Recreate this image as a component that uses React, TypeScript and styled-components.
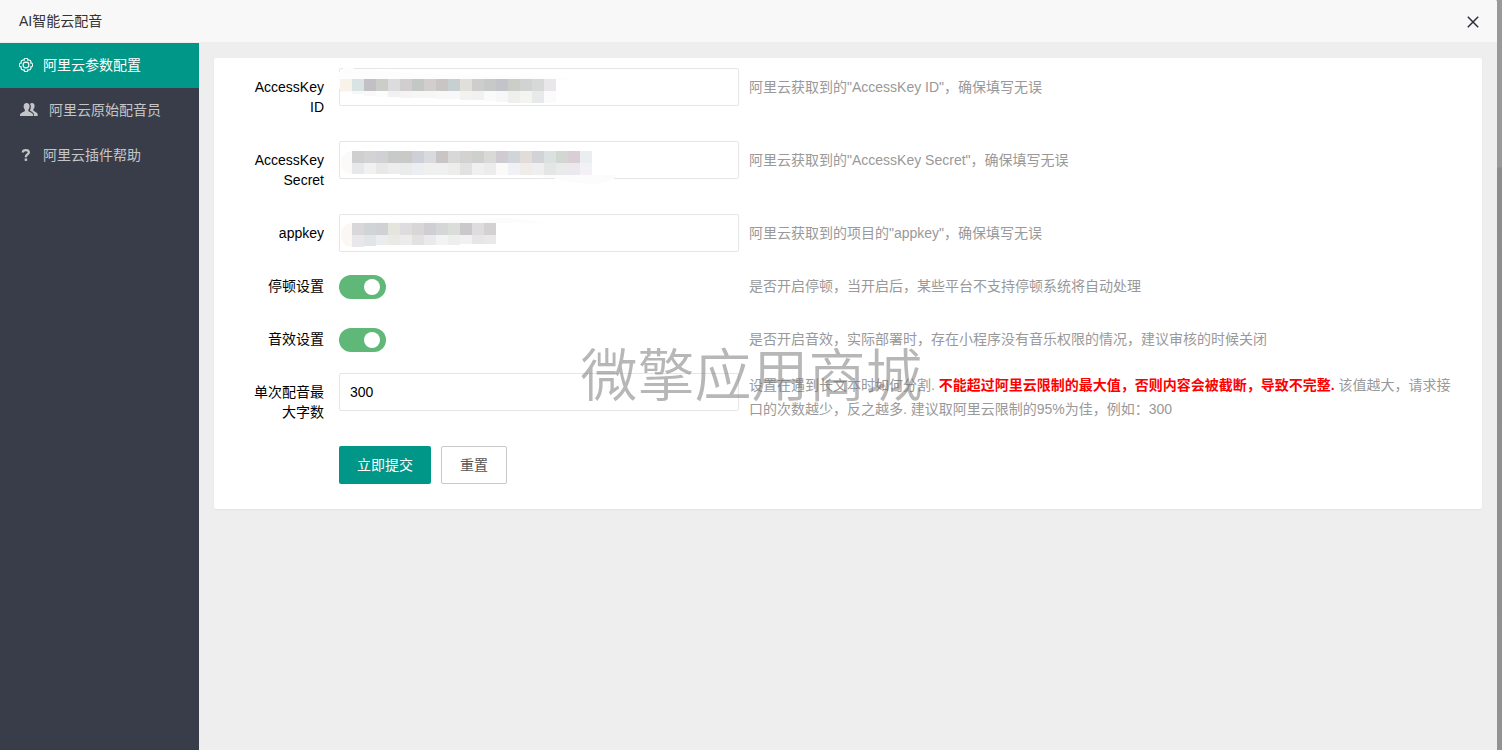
import React from 'react';
import styled, { createGlobalStyle } from 'styled-components';

const GlobalStyle = createGlobalStyle`
  * { box-sizing: border-box; }
  body {
    margin: 0;
    background: #929292;
    color: #000;
    font: 14px/20px "Liberation Sans", "Noto Sans CJK SC", sans-serif;
  }
  button, input { font: inherit; }
`;

const Backdrop = styled.div`
  min-height: 100vh;
  display: flex;
  padding-right: 5px;
  background: linear-gradient(#999 0, #999 167px, #8c8c8c 168px, #929292 100%);
`;

const Dialog = styled.section`
  position: relative;
  flex: 1;
  display: flex;
  flex-direction: column;
  background: #eee;
  border-radius: 0 2px 0 0;
  overflow: hidden;
`;

const TitleBar = styled.header`
  display: flex;
  align-items: center;
  justify-content: space-between;
  height: 43px;
  padding: 0 18px 0 19px;
  background: #f8f8f8;
  border-bottom: 1px solid #eee;
`;

const Title = styled.h1`
  margin: 0;
  font-size: 14px;
  font-weight: 400;
  color: #333;
`;

const CloseButton = styled.button`
  display: flex;
  padding: 2px 0 0;
  border: 0;
  background: none;
  color: #2e2d3c;
  cursor: pointer;
`;

const Body = styled.div`
  flex: 1;
  display: flex;
`;

const Sidebar = styled.nav`
  flex: 0 0 199px;
  background: #393d49;
`;

const NavLink = styled.a<{ $active?: boolean }>`
  display: flex;
  align-items: center;
  gap: 10px;
  height: 45px;
  padding: 0 19px 2px;
  text-decoration: none;
  color: ${(p) => (p.$active ? '#fff' : '#c4c5c8')};
  background: ${(p) => (p.$active ? '#009688' : 'transparent')};
`;

const Main = styled.main`
  flex: 1;
  min-width: 0;
  padding: 15px;
`;

const Card = styled.form`
  padding: 10px 15px;
  background: #fff;
  border-radius: 2px;
  box-shadow: 0 1px 2px rgba(0, 0, 0, 0.05);
`;

const Row = styled.div`
  display: flex;
  align-items: flex-start;
  margin-bottom: 15px;
`;

const Label = styled.label`
  flex: 0 0 110px;
  padding: 9px 15px;
  text-align: right;
`;

const Control = styled.div`
  position: relative;
  flex: 0 0 400px;
  display: flex;
  align-items: center;
  min-height: 38px;
`;

const TextInput = styled.input`
  width: 100%;
  height: 38px;
  padding: 0 10px;
  border: 1px solid #e6e6e6;
  border-radius: 2px;
  background: #fff;
  color: #000;
  outline: 0;
`;

const Switch = styled.input`
  appearance: none;
  width: 47px;
  height: 24px;
  margin: 2px 0 0;
  padding: 4px 6px;
  border-radius: 12px;
  background: #5fb878;
  cursor: pointer;
  &::before {
    content: '';
    display: block;
    width: 16px;
    height: 16px;
    margin-left: auto;
    border-radius: 50%;
    background: #fff;
  }
  &:not(:checked) { background: #d2d2d2; }
  &:not(:checked)::before { margin-left: 0; }
`;

const Hint = styled.p<{ $long?: boolean }>`
  flex: 1;
  margin: 0 10px;
  padding: ${(p) => (p.$long ? '0' : '9px 0')};
  line-height: ${(p) => (p.$long ? '24px' : '20px')};
  color: #999;
`;

const Warning = styled.strong`
  color: #f00;
`;

const Actions = styled.div`
  display: flex;
  gap: 10px;
  margin: 0 0 15px 110px;
`;

const Button = styled.button<{ $primary?: boolean }>`
  height: 38px;
  padding: 0 18px;
  border: ${(p) => (p.$primary ? '0' : '1px solid #c9c9c9')};
  border-radius: 2px;
  background: ${(p) => (p.$primary ? '#009688' : '#fff')};
  color: ${(p) => (p.$primary ? '#fff' : '#555')};
  cursor: pointer;
`;

const MosaicLayer = styled.svg`
  position: absolute;
  left: -9px;
  top: -8px;
  pointer-events: none;
`;

const Watermark = styled.div`
  position: absolute;
  top: 342px;
  left: 0;
  right: 0;
  padding-left: 6px;
  text-align: center;
  font: 350 57px/58px "Noto Sans CJK SC", sans-serif;
  color: rgba(112, 112, 112, 0.5);
  pointer-events: none;
`;

const GearIcon = () => (
  <svg width="14" height="14" viewBox="0 0 14 14" fill="none" stroke="currentColor" strokeWidth="1.100" aria-hidden="true">
    <path d="M11.700 5a2 2 0 0 1 0 4 2 2 0 0 1-2.700 2.700 2 2 0 0 1-4 0A2 2 0 0 1 2.300 9a2 2 0 0 1 0-4A2 2 0 0 1 5 2.300a2 2 0 0 1 4 0A2 2 0 0 1 11.700 5z" />
    <circle cx="7" cy="7" r="2.900" />
  </svg>
);

const PeopleIcon = () => (
  <svg width="20" height="14" viewBox="0 0 20 14" fill="currentColor" aria-hidden="true">
    <path d="M7.6 0c2 0 3 1.400 3 3.300 0 1.500-.6 2.700-1.300 3.400v1.200c0 .6 4.900 1.700 4.900 4v1.100H1v-1.100c0-2.300 4.900-3.400 4.900-4V6.700C5.200 6 4.600 4.800 4.600 3.300 4.600 1.400 5.600 0 7.600 0z" />
    <path d="M11 1c.5-.6 1.200-.9 1.900-.9 1.800 0 2.700 1.300 2.700 3 0 1.400-.5 2.500-1.200 3.200v1.200c0 .6 4.300 1.800 4.300 4.100V13H15v-1.100c0-2-1.900-3.200-4-4.200v-.5c.5-.8.900-2.100.9-3.600 0-1-.3-1.900-.9-2.600z" />
  </svg>
);

const QuestionIcon = () => (
  <svg width="14" height="14" viewBox="0 0 14 14" fill="none" stroke="currentColor" aria-hidden="true">
    <path strokeWidth="2.300" d="M3.800 4.500C3.900 2.900 5 2.100 6.800 2.100s3 .8 3 2.300c0 2-2.900 2-2.900 4.300v.5" />
    <path strokeWidth="2.500" d="M6.900 10.500v2.400" />
  </svg>
);

const CloseIcon = () => (
  <svg width="12" height="12" viewBox="0 0 12 12" fill="none" stroke="currentColor" strokeWidth="1.500" aria-hidden="true">
    <path d="M.8.8l10.400 10.400M11.200.8.8 11.200" />
  </svg>
);

type Smear = { d: string; fill: string };
type MosaicData = { x: number; y: number; top: string[]; bottom: string[]; heights: number[]; smears: Smear[] };

const CELL = 12;

const mosaics: Record<string, MosaicData> = {
  id: {
    x: 10,
    y: 19,
    top: ['#f8f2ea', '#dae3e4', '#c2bfc5', '#cbcec8', '#dcdcdf', '#d2cdcf', '#c4c8c5', '#d2cecd', '#cac5c5', '#c8cfd1', '#e0dfda', '#cdcdcb', '#c6c9c8', '#c2c4ca', '#cbcec8', '#d2d2d2', '#d6d9d7', '#e9e7ea'],
    bottom: ['#fdfbf8', '#f6f7f7', '#f9f8fa', '#fcfcfc', '#f1f1f2', '#f4f3f5', '#f6f6f6', '#f7f6f6', '#f8f8f8', '#f8f8f9', '#f2f2f0', '#f1f1f0', '#fafafa', '#f7f7f8', '#efefed', '#f4f4f1', '#e7e9eb', '#fbfbfb'],
    heights: [1, 3, 5, 6, 6, 7, 7, 7, 8, 8, 9, 9, 10, 11, 12, 12, 12, 12],
    smears: [{ d: 'M7 19C7 7 20 5 25 9l65 5 150 4 0 2H10v10C7 27 7 23 7 19z', fill: '#fdfdfd' }],
  },
  secret: {
    x: 22,
    y: 18,
    top: ['#cfcfcf', '#d3d3d3', '#d1d1d5', '#c7cac9', '#c9c9c8', '#cdd0d6', '#d9dadd', '#cac5c5', '#d8d8d8', '#d3d2d0', '#ced0cd', '#d9d9d7', '#d0cad1', '#d0d5d9', '#e2dcd8', '#d1d3d6', '#dae1e0', '#d3d7d2', '#d9ced3', '#eaeeef'],
    bottom: ['#e6e8ea', '#f1f1f1', '#e9e8e6', '#ededed', '#e9eceb', '#eceef1', '#f0f0ee', '#eff0f0', '#ededeb', '#e2e2e3', '#f0f0f0', '#ececed', '#fafaf8', '#eff1f4', '#efecea', '#efefef', '#e4e6e5', '#e8ebe9', '#ebe9ed', '#f3f1f3'],
    heights: [11, 11, 11, 11, 12, 12, 12, 12, 12, 12, 12, 12, 12, 12, 12, 12, 12, 12, 12, 12],
    smears: [
      { d: 'M22 18C7 18 7 41 22 41z', fill: '#fcfaf8' },
      { d: 'M210 42h80c-6 3-10 7-22 9-16 0-35-2-45-6l-13-1z', fill: '#fcfcfc' },
    ],
  },
  appkey: {
    x: 22,
    y: 17,
    top: ['#d8d8da', '#d0d4d5', '#cfd1d2', '#e5e5de', '#dddddf', '#d8d7d5', '#cfced3', '#d5d7d6', '#dbddda', '#cbc8cb', '#dedcde', '#d3d1d2'],
    bottom: ['#e9e7e9', '#e1e5e7', '#eaecee', '#e9e9e6', '#edecea', '#e2e2e2', '#eaeaec', '#f3f3f3', '#edeeed', '#f1f1f1', '#e6e6e6', '#e9e9e9'],
    heights: [12, 11, 10, 10, 10, 10, 10, 10, 10, 9, 9, 9],
    smears: [
      { d: 'M22 17C7 17 7 41 22 41z', fill: '#fbf7f5' },
      { d: 'M40 16l100-2c25-3 50-3 75 3H40z', fill: '#fcfcfc' },
    ],
  },
};

const Mosaic = ({ data }: { data: MosaicData }) => (
  <MosaicLayer width="300" height="60" viewBox="0 0 300 60" shapeRendering="crispEdges" aria-hidden="true">
    {data.smears.map((s) => (
      <path key={s.d} d={s.d} fill={s.fill} />
    ))}
    {data.top.map((c, i) => (
      <rect key={'t' + i} x={data.x + i * CELL} y={data.y} width={CELL} height={CELL} fill={c} />
    ))}
    {data.bottom.map((c, i) => (
      <rect key={'b' + i} x={data.x + i * CELL} y={data.y + CELL} width={CELL} height={data.heights[i]} fill={c} />
    ))}
  </MosaicLayer>
);

const maskedFields = [
  { id: 'id', label: 'AccessKey ID', hint: '阿里云获取到的"AccessKey ID"，确保填写无误' },
  { id: 'secret', label: 'AccessKey Secret', hint: '阿里云获取到的"AccessKey Secret"，确保填写无误' },
  { id: 'appkey', label: 'appkey', hint: '阿里云获取到的项目的"appkey"，确保填写无误' },
];

const switches = [
  { id: 'pause', label: '停顿设置', hint: '是否开启停顿，当开启后，某些平台不支持停顿系统将自动处理' },
  { id: 'sound', label: '音效设置', hint: '是否开启音效，实际部署时，存在小程序没有音乐权限的情况，建议审核的时候关闭' },
];

export default function App() {
  return (
    <>
      <GlobalStyle />
      <Backdrop>
        <Dialog>
          <TitleBar>
            <Title>AI智能云配音</Title>
            <CloseButton type="button" aria-label="关闭"><CloseIcon /></CloseButton>
          </TitleBar>
          <Body>
            <Sidebar>
              <NavLink href="#config" $active><GearIcon />阿里云参数配置</NavLink>
              <NavLink href="#voices"><PeopleIcon />阿里云原始配音员</NavLink>
              <NavLink href="#help"><QuestionIcon />阿里云插件帮助</NavLink>
            </Sidebar>
            <Main>
              <Card onSubmit={(e) => e.preventDefault()}>
                {maskedFields.map((f) => (
                  <Row key={f.id}>
                    <Label htmlFor={f.id}>{f.label}</Label>
                    <Control>
                      <TextInput id={f.id} type="text" autoComplete="off" />
                      <Mosaic data={mosaics[f.id]} />
                    </Control>
                    <Hint>{f.hint}</Hint>
                  </Row>
                ))}
                {switches.map((s) => (
                  <Row key={s.id}>
                    <Label htmlFor={s.id}>{s.label}</Label>
                    <Control>
                      <Switch id={s.id} type="checkbox" role="switch" defaultChecked />
                    </Control>
                    <Hint>{s.hint}</Hint>
                  </Row>
                ))}
                <Row>
                  <Label htmlFor="limit">单次配音最大字数</Label>
                  <Control>
                    <TextInput id="limit" type="text" defaultValue="300" />
                  </Control>
                  <Hint $long>
                    设置在遇到长文本时如何分割. <Warning>不能超过阿里云限制的最大值，否则内容会被截断，导致不完整.</Warning> 该值越大，请求接口的次数越少，反之越多. 建议取阿里云限制的95%为佳，例如：300
                  </Hint>
                </Row>
                <Actions>
                  <Button type="submit" $primary>立即提交</Button>
                  <Button type="reset">重置</Button>
                </Actions>
              </Card>
            </Main>
          </Body>
          <Watermark>微擎应用商城</Watermark>
        </Dialog>
      </Backdrop>
    </>
  );
}
